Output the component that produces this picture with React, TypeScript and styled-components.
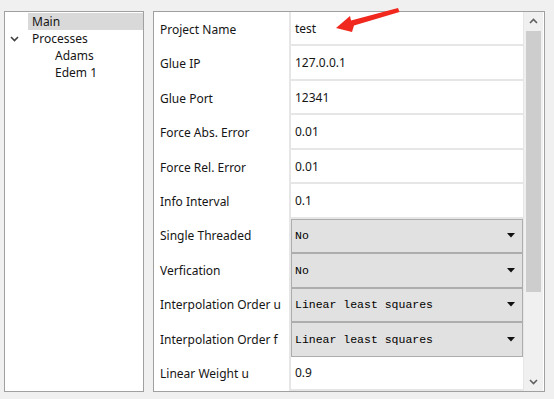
import { Fragment } from "react";
import styled, { createGlobalStyle } from "styled-components";

type Row = { label: string; value: string; combo?: boolean };

const rows: Row[] = [
  { label: "Project Name", value: "test" },
  { label: "Glue IP", value: "127.0.0.1" },
  { label: "Glue Port", value: "12341" },
  { label: "Force Abs. Error", value: "0.01" },
  { label: "Force Rel. Error", value: "0.01" },
  { label: "Info Interval", value: "0.1" },
  { label: "Single Threaded", value: "No", combo: true },
  { label: "Verfication", value: "No", combo: true },
  { label: "Interpolation Order u", value: "Linear least squares", combo: true },
  { label: "Interpolation Order f", value: "Linear least squares", combo: true },
  { label: "Linear Weight u", value: "0.9" },
];

const GlobalStyle = createGlobalStyle`
  html, body {
    margin: 0;
    padding: 0;
    background: #f0f0f0;
  }
  body {
    font-family: "Noto Sans", "Liberation Sans", sans-serif;
    color: #151515;
  }
`;

const Page = styled.div`
  position: relative;
  display: flex;
  gap: 9px;
  width: 554px;
  height: 399px;
  padding: 11px 0 0 4px;
  box-sizing: border-box;
`;

const TreePanel = styled.div`
  width: 140px;
  height: 381px;
  box-sizing: border-box;
  background: #fff;
  border: 1px solid #a0a0a0;
  padding-top: 1px;
`;

const TreeRow = styled.div<{ $depth: number }>`
  display: flex;
  align-items: center;
  height: 17px;
  padding-left: ${({ $depth }) => $depth * 23}px;
`;

const Toggle = styled.div`
  width: 23px;
  height: 17px;
  display: flex;
  align-items: center;
  padding-left: 5px;
  box-sizing: border-box;
`;

const TreeLabel = styled.div<{ $selected?: boolean }>`
  flex: 1;
  height: 17px;
  line-height: 17px;
  padding-left: 4px;
  font-size: 12px;
  background: ${({ $selected }) => ($selected ? "#d9d9d9" : "transparent")};
`;

const GridPanel = styled.div`
  width: 392px;
  height: 381px;
  box-sizing: border-box;
  background: #fff;
  border: 1px solid #a0a0a0;
  display: flex;
`;

const Grid = styled.div`
  width: 370px;
  display: grid;
  grid-template-columns: 135px 1fr;
  grid-template-rows: repeat(11, 1fr);
`;

const LabelCell = styled.div`
  display: flex;
  align-items: center;
  padding-left: 6px;
  font-size: 12px;
  white-space: nowrap;
  overflow: hidden;
`;

const ValueCell = styled.div<{ $combo?: boolean }>`
  display: flex;
  align-items: stretch;
  border-left: 2px solid #e6e6e6;
  border-right: 1px solid #e6e6e6;
  border-bottom: ${({ $combo }) => ($combo ? "none" : "2px solid #e6e6e6")};
  padding-left: ${({ $combo }) => ($combo ? "0" : "4px")};
  font-size: 12px;
`;

const ValueText = styled.span`
  align-self: center;
`;

const Combo = styled.div`
  flex: 1;
  display: flex;
  align-items: center;
  justify-content: space-between;
  background: #e1e1e1;
  border: 1px solid #adadad;
  padding: 0 7px 0 3px;
  font-family: "Liberation Mono", "DejaVu Sans Mono", monospace;
  font-size: 11.5px;
  color: #000;
`;

const Scrollbar = styled.div`
  width: 19px;
  display: flex;
  flex-direction: column;
  background: #f0f0f0;
`;

const ScrollButton = styled.div`
  height: 18px;
  display: flex;
  align-items: center;
  justify-content: center;
`;

const Track = styled.div`
  flex: 1;
  padding: 1px 2px;
`;

const Thumb = styled.div`
  height: 261px;
  background: #cdcdcd;
`;

const Pointer = styled.svg`
  position: absolute;
  left: 330px;
  top: 5px;
`;

const Chevron = ({ up, color = "#606060" }: { up?: boolean; color?: string }) => (
  <svg width="9" height="6" viewBox="0 0 9 6">
    <polyline
      points={up ? "1,5 4.5,1.5 8,5" : "1,1 4.5,4.5 8,1"}
      fill="none"
      stroke={color}
      strokeWidth="1.6"
    />
  </svg>
);

const DropArrow = () => (
  <svg width="8" height="5" viewBox="0 0 8 5">
    <polygon points="0,0 8,0 4,4.5" fill="#111" />
  </svg>
);

export default function App() {
  return (
    <>
      <GlobalStyle />
      <Page>
        <TreePanel>
          <TreeRow $depth={0}>
            <Toggle />
            <TreeLabel $selected>Main</TreeLabel>
          </TreeRow>
          <TreeRow $depth={0}>
            <Toggle>
              <Chevron color="#404040" />
            </Toggle>
            <TreeLabel>Processes</TreeLabel>
          </TreeRow>
          <TreeRow $depth={1}>
            <Toggle />
            <TreeLabel>Adams</TreeLabel>
          </TreeRow>
          <TreeRow $depth={1}>
            <Toggle />
            <TreeLabel>Edem 1</TreeLabel>
          </TreeRow>
        </TreePanel>
        <GridPanel>
          <Grid>
            {rows.map((r) => (
              <Fragment key={r.label}>
                <LabelCell>{r.label}</LabelCell>
                <ValueCell $combo={r.combo}>
                  {r.combo ? (
                    <Combo>
                      <span>{r.value}</span>
                      <DropArrow />
                    </Combo>
                  ) : (
                    <ValueText>{r.value}</ValueText>
                  )}
                </ValueCell>
              </Fragment>
            ))}
          </Grid>
          <Scrollbar>
            <ScrollButton>
              <Chevron up />
            </ScrollButton>
            <Track>
              <Thumb />
            </Track>
            <ScrollButton>
              <Chevron />
            </ScrollButton>
          </Scrollbar>
        </GridPanel>
        <Pointer width="75" height="30" viewBox="0 0 75 30">
          <polygon
            points="6,23 20,11 21,15.5 68,3 69.5,7 24,20.5 22,27"
            fill="#f0281e"
          />
        </Pointer>
      </Page>
    </>
  );
}
